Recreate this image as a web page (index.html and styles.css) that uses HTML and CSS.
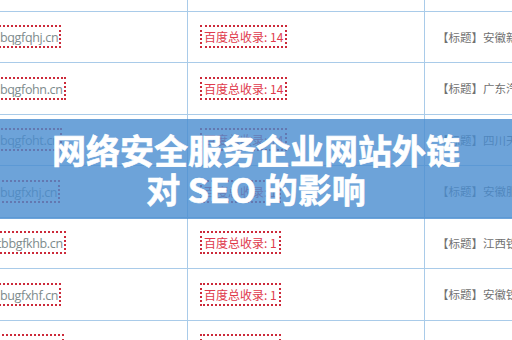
FILE: index.html
```html
<!DOCTYPE html>
<html lang="zh-CN">
<head>
<meta charset="utf-8">
<title>网络安全服务企业网站外链对 SEO 的影响</title>
<link rel="stylesheet" href="styles.css">
</head>
<body>
<div class="page">
  <div class="table">
    <div class="row">
      <div class="c1"></div>
      <div class="c2"></div>
      <div class="c3"></div>
    </div>
    <div class="row">
      <div class="c1"><span class="domain">bqgfqhj.cn</span></div>
      <div class="c2"><span class="badge">百度总收录: 14</span></div>
      <div class="c3"><span class="title">【标题】安徽新闻网络安全服务</span></div>
    </div>
    <div class="row">
      <div class="c1"><span class="domain">bqgfohn.cn</span></div>
      <div class="c2"><span class="badge">百度总收录: 14</span></div>
      <div class="c3"><span class="title">【标题】广东汽车网络安全服务</span></div>
    </div>
    <div class="row">
      <div class="c1"><span class="domain">bqgfoht.cn</span></div>
      <div class="c2"><span class="badge">百度总收录: 14</span></div>
      <div class="c3"><span class="title">【标题】四川天府网络安全服务</span></div>
    </div>
    <div class="row">
      <div class="c1"><span class="domain">bugfxhj.cn</span></div>
      <div class="c2"><span class="badge">百度总收录: 1</span></div>
      <div class="c3"><span class="title">【标题】安徽服务网络安全服务</span></div>
    </div>
    <div class="row">
      <div class="c1"><span class="domain shift">tbbgfkhb.cn</span></div>
      <div class="c2"><span class="badge">百度总收录: 1</span></div>
      <div class="c3"><span class="title">【标题】江西铁路网络安全服务</span></div>
    </div>
    <div class="row">
      <div class="c1"><span class="domain">bugfxhf.cn</span></div>
      <div class="c2"><span class="badge">百度总收录: 1</span></div>
      <div class="c3"><span class="title">【标题】安徽铁路网络安全服务</span></div>
    </div>
    <div class="row">
      <div class="c1"><span class="domain">bugfxkb.cn</span></div>
      <div class="c2"><span class="badge">百度总收录: 1</span></div>
      <div class="c3"><span class="title">【标题】安徽网络安全服务</span></div>
    </div>
  </div>
  <div class="band">
    <h1 class="headline">网络安全服务企业网站外链<br>对 SEO 的影响</h1>
  </div>
</div>
</body>
</html>
```
FILE: styles.css
```css
html, body {
  margin: 0;
  padding: 0;
  background: #ffffff;
}
body {
  width: 512px;
  height: 340px;
  overflow: hidden;
  font-family: "Noto Sans CJK SC", "Noto Sans", sans-serif;
}
.page {
  position: relative;
  width: 512px;
  height: 340px;
  overflow: hidden;
}
.table {
  margin-top: -40px;
  display: flex;
  flex-direction: column;
}
.row {
  display: flex;
  height: 51.5px;
  box-sizing: border-box;
  border-bottom: 1px solid #a9cbe9;
}
.c1, .c2, .c3 {
  display: flex;
  align-items: center;
  box-sizing: border-box;
  overflow: hidden;
  white-space: nowrap;
}
.c1 {
  width: 188px;
  border-right: 1px solid #a9cbe9;
}
.c2 {
  width: 237px;
  border-right: 1px solid #a9cbe9;
  padding-left: 12px;
}
.c3 {
  flex: 1;
  padding-left: 12px;
}
.domain {
  margin-left: -6px;
  padding: 0 1px 0 4px;
  height: 23px;
  line-height: 21px;
  box-sizing: border-box;
  border: 2px dotted #cc2a3a;
  font-family: "Open Sans", "Noto Sans", sans-serif;
  font-size: 12.5px;
  color: #7d8b8c;
  letter-spacing: -0.35px;
}
.domain.shift {
  margin-left: -9px;
}
.badge {
  padding: 0 2px;
  height: 23px;
  line-height: 20px;
  box-sizing: border-box;
  border: 2px dotted #cc2a3a;
  font-size: 12px;
  color: #e03a4c;
}
.title {
  font-size: 11.5px;
  color: #707070;
}
.band {
  position: absolute;
  left: 0;
  top: 119px;
  width: 512px;
  height: 100px;
  background: rgba(72, 140, 207, 0.8);
  display: flex;
  align-items: center;
  justify-content: center;
}
.headline {
  margin: 0;
  font-size: 34px;
  line-height: 39px;
  font-weight: 700;
  color: #ffffff;
  -webkit-text-stroke: 0.6px #ffffff;
  text-align: center;
  letter-spacing: 0;
}
```
